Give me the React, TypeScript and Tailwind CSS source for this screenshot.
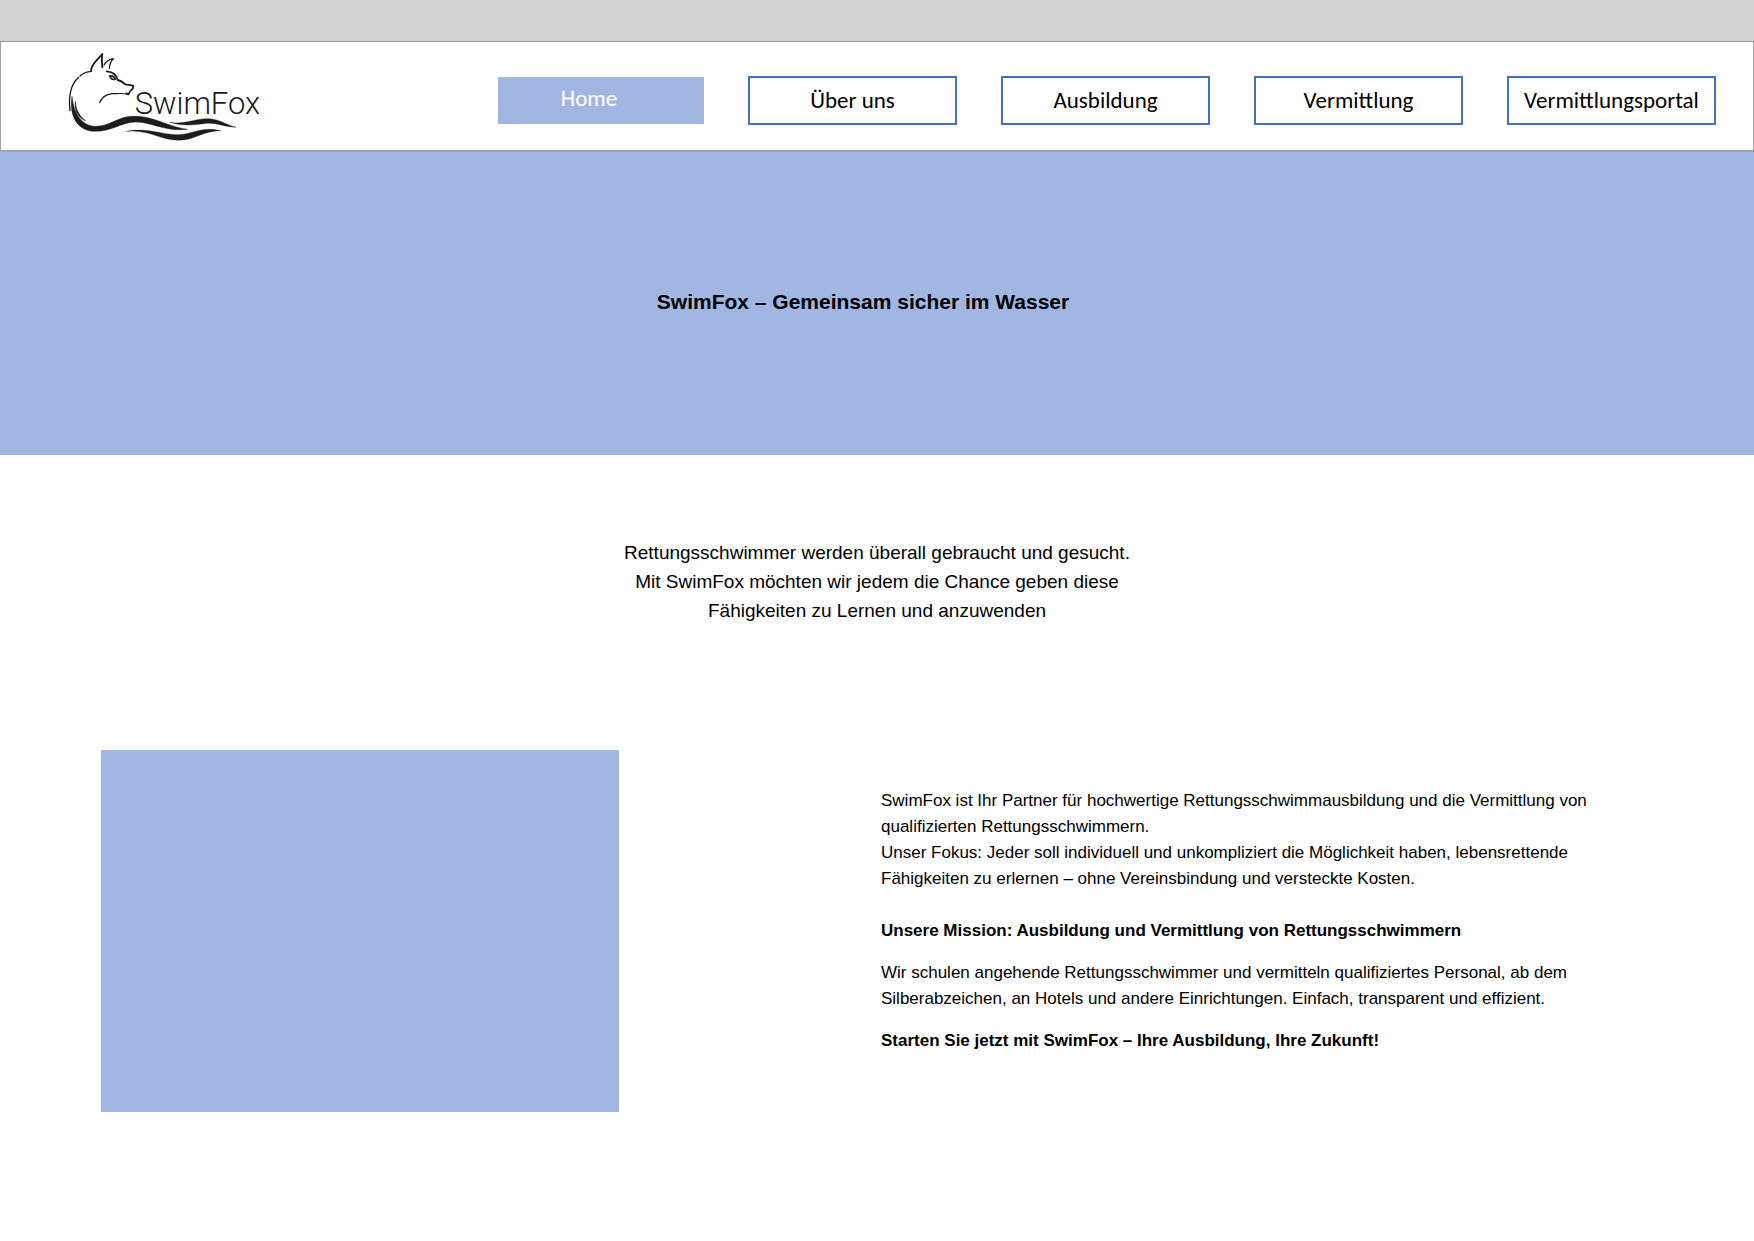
import React from "react";

const navItems = [
  { label: "Home", href: "#home", active: true },
  { label: "Über uns", href: "#ueber-uns", active: false },
  { label: "Ausbildung", href: "#ausbildung", active: false },
  { label: "Vermittlung", href: "#vermittlung", active: false },
  { label: "Vermittlungsportal", href: "#vermittlungsportal", active: false },
];

const Logo: React.FC = () => (
  <svg
    viewBox="0 0 690 324"
    className="w-[230px] h-[108px]"
    role="img"
    aria-label="SwimFox"
    fill="none"
    stroke="#1c1c1c"
    strokeLinecap="round"
    strokeLinejoin="round"
  >
    {/* Ears */}
    <path d="M123 87 C124 74 129 67 139 56 L157 36 C154 48 156 62 157 76" strokeWidth="5.5" />
    <path d="M162 69 C167 58 177 53 190 50 C183 57 179 66 178 79" strokeWidth="4" />
    {/* Neck */}
    <path d="M124 88 C110 89 98 94 90 102" strokeWidth="4" />
    <path d="M86 106 C68 122 54 154 60 206" strokeWidth="4" />
    {/* Face */}
    <path
      d="M170 88 C190 90 200 97 203 114 C214 116 220 122 226 127 L250 131 L248 140 C242 144 238 150 235 157 L229 154"
      strokeWidth="5.5"
    />
    <path d="M232 156 C218 153 202 155 186 155 C168 157 155 168 149 182" strokeWidth="3.5" />
    <path d="M178 102 C186 101 193 103 196 111 C190 114 184 111 181 106" strokeWidth="5" />
    {/* Body and waves */}
    <path
      d="M66 164 C72 218 98 252 136 253 C180 254 200 225 246 223 C310 220 344 252 412 262 C346 270 306 240 256 240 C212 242 186 268 136 268 C88 268 56 230 66 164 Z"
      fill="#1c1c1c"
      strokeWidth="1.5"
    />
    <path d="M76 180 C78 204 88 222 106 236 C84 226 74 206 76 180 Z" fill="#1c1c1c" strokeWidth="2" />
    <path
      d="M360 241 C400 248 430 231 470 230 C506 229 526 247 558 256 C524 255 500 242 470 244 C432 249 400 254 360 241 Z"
      fill="#1c1c1c"
      strokeWidth="1"
    />
    <path
      d="M230 268 C290 255 330 278 386 278 C430 276 456 252 512 266 C460 266 434 295 384 295 C330 294 296 262 230 268 Z"
      fill="#1c1c1c"
      strokeWidth="1"
    />
    <text
      x="254"
      y="216"
      fill="#1c1c1c"
      stroke="none"
      className="font-['Roboto'] font-light text-[93px]"
    >
      SwimFox
    </text>
  </svg>
);

const App: React.FC = () => {
  return (
    <div className="min-h-screen bg-white text-black font-['Liberation_Sans',sans-serif]">
      <div className="h-[41px] bg-[#d2d2d2]" />

      <header className="flex items-center justify-between border border-b-2 border-[#a2a2a2] pl-[49px] pr-[37px]">
        <a href="#home">
          <Logo />
        </a>
        <nav className="flex items-center gap-11 pt-2 font-['Carlito','Open_Sans',sans-serif] text-[23px] leading-7">
          {navItems.map((item) => (
            <a
              key={item.label}
              href={item.href}
              className={
                item.active
                  ? "flex h-[47px] w-[206px] items-center justify-center bg-[#a1b7e1] pr-6 pb-1 text-white"
                  : "flex h-[49px] w-[209px] items-center justify-center border-2 border-[#4671b7] bg-white pb-px"
              }
            >
              {item.label}
            </a>
          ))}
        </nav>
      </header>

      <section className="flex h-[303px] items-center justify-center bg-[#a1b7e1] pr-7 pb-1">
        <h1 className="text-[21px] font-bold">SwimFox – Gemeinsam sicher im Wasser</h1>
      </section>

      <p className="pt-[83px] text-center text-[19px] leading-[29px]">
        Rettungsschwimmer werden überall gebraucht und gesucht.
        <br />
        Mit SwimFox möchten wir jedem die Chance geben diese
        <br />
        Fähigkeiten zu Lernen und anzuwenden
      </p>

      <section className="grid grid-cols-2 items-center pt-[125px]">
        <div className="pl-[101px]">
          <div className="h-[362px] w-[518px] max-w-full bg-[#a1b7e1]" />
        </div>
        <div className="pb-5 pl-1 text-[17px] leading-[26px]">
          <p>
            SwimFox ist Ihr Partner für hochwertige Rettungsschwimmausbildung und die Vermittlung von
            <br />
            qualifizierten Rettungsschwimmern.
            <br />
            Unser Fokus: Jeder soll individuell und unkompliziert die Möglichkeit haben, lebensrettende
            <br />
            Fähigkeiten zu erlernen – ohne Vereinsbindung und versteckte Kosten.
          </p>
          <h2 className="mt-[26px] font-bold">
            Unsere Mission: Ausbildung und Vermittlung von Rettungsschwimmern
          </h2>
          <p className="mt-4">
            Wir schulen angehende Rettungsschwimmer und vermitteln qualifiziertes Personal, ab dem
            <br />
            Silberabzeichen, an Hotels und andere Einrichtungen. Einfach, transparent und effizient.
          </p>
          <p className="mt-4 font-bold">Starten Sie jetzt mit SwimFox – Ihre Ausbildung, Ihre Zukunft!</p>
        </div>
      </section>
    </div>
  );
};

export default App;
